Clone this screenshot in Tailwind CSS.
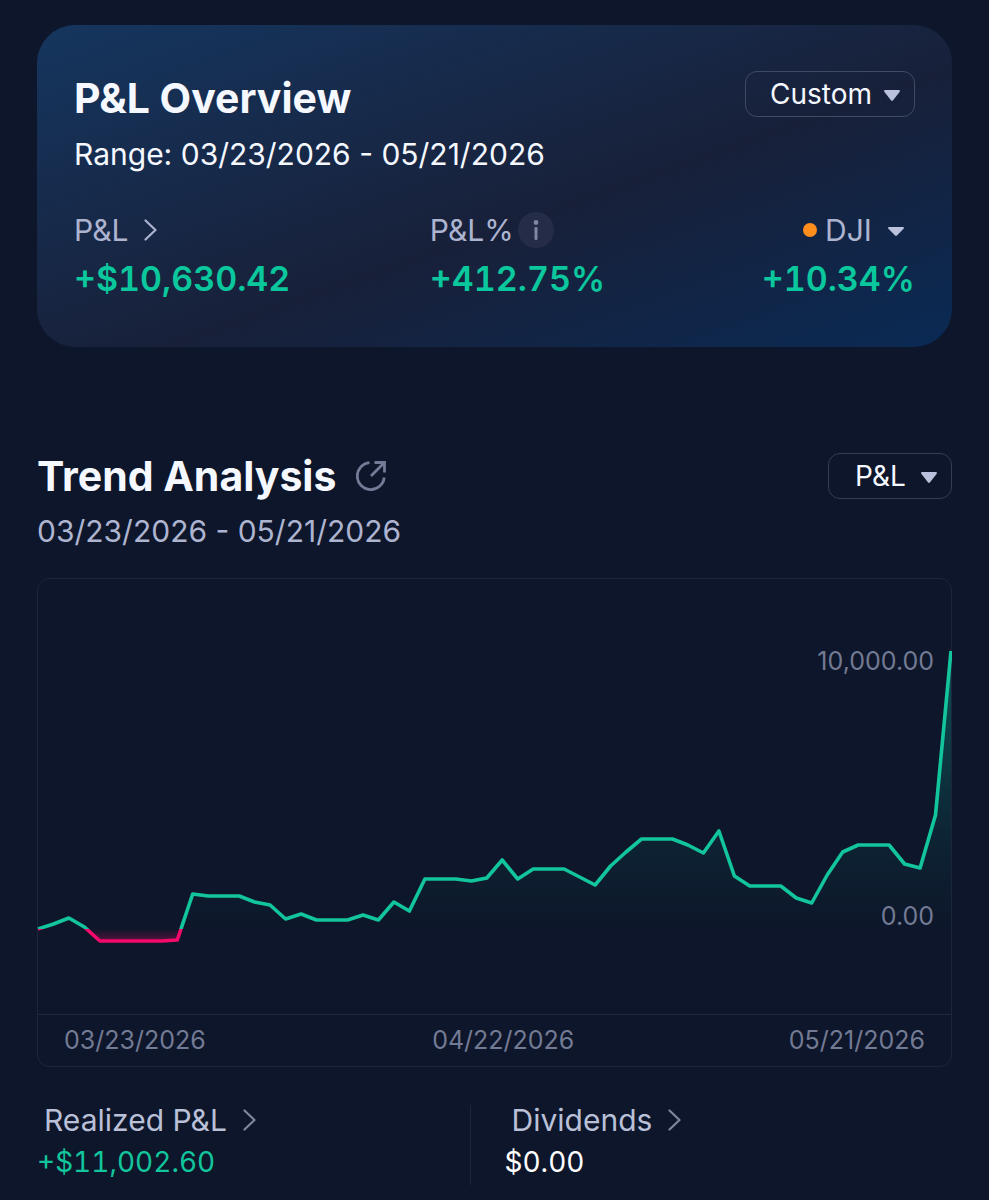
<!doctype html>
<html lang="en">
<head>
  <meta charset="UTF-8">
  <meta name="viewport" content="width=device-width, initial-scale=1.0">
  <title>P&amp;L Overview</title>
  <script src="https://cdn.jsdelivr.net/npm/@tailwindcss/browser@4"></script>
</head>
<body class="min-h-screen bg-[#0d162a] px-[37px] pt-[25px] font-[Inter,sans-serif] text-[#f5f8ff]">

  <!-- Overview card -->
  <section class="rounded-[38px] bg-[linear-gradient(to_bottom_right,#15365f_0%,#182039_57%,#0a2a54_100%)] px-[37px] pt-[46px] pb-[38px]">
    <div class="flex items-start justify-between">
      <div>
        <h1 class="text-[41px] leading-[54px] font-bold">P&amp;L Overview</h1>
        <p class="mt-2 text-[30px] leading-[42px]">Range: 03/23/2026 - 05/21/2026</p>
      </div>
      <div class="relative">
        <select aria-label="Date range" class="block h-[46px] w-[170px] appearance-none rounded-xl border border-[#404a63] bg-transparent pl-6 text-[28px] leading-10 outline-none">
          <option>Custom</option>
        </select>
        <svg class="pointer-events-none absolute top-[19px] right-[15px] h-3 w-4" viewBox="0 0 16 12" fill="#b9c1dc"><path d="M1.2 0h13.6c1 0 1.5 1 .9 1.8L8.9 10.5c-.5.6-1.3.6-1.8 0L.3 1.8C-.3 1 .2 0 1.2 0z"/></svg>
      </div>
    </div>

    <div class="mt-9 grid grid-cols-[11fr_15fr]">
      <div>
        <a href="#" class="flex items-center gap-4 text-[30px] leading-[38px] text-[#adb4d0]">
          P&amp;L
          <svg class="h-[22px] w-[13px]" viewBox="0 0 13 22" fill="none" stroke="currentColor" stroke-width="2.2" stroke-linecap="round" stroke-linejoin="round"><path d="M1.5 1.5 11.5 11l-10 9.5"/></svg>
        </a>
        <p class="text-[34px] leading-[60px] font-semibold tabular-nums text-[#0bc79d]">+$10,630.42</p>
      </div>
      <div class="flex justify-between">
        <div>
          <div class="flex items-center gap-1 text-[30px] leading-[38px] text-[#adb4d0]">
            P&amp;L%
            <button aria-label="About P&amp;L%" class="-my-px flex size-9 items-center justify-center rounded-full bg-[#252c47]">
              <svg class="h-5 w-1.5" viewBox="0 0 6 20" fill="#7e86a0"><circle cx="3" cy="2.5" r="2.4"/><rect x="1.5" y="7" width="3" height="13" rx="1"/></svg>
            </button>
          </div>
          <p class="text-[34px] leading-[60px] font-semibold tabular-nums text-[#0bc79d]">+412.75%</p>
        </div>
        <div>
          <div class="relative flex items-center justify-end gap-2 pr-[11px] text-[30px] leading-[38px] text-[#adb4d0]">
            <span class="size-3.5 rounded-full bg-[#ff8e1c]"></span>
            <select aria-label="Benchmark" class="h-[38px] appearance-none bg-transparent pr-8 outline-none">
              <option>DJI</option>
            </select>
            <svg class="pointer-events-none absolute top-4 right-[11px] h-2.5 w-4" viewBox="0 0 16 10" fill="#b9c1dc"><path d="M1.2 0h13.6c1 0 1.5 1 .8 1.7L8.9 8.6c-.5.6-1.3.6-1.8 0L.4 1.7C-.3 1 .2 0 1.2 0z"/></svg>
          </div>
          <p class="text-[34px] leading-[60px] font-semibold tabular-nums text-[#0bc79d]">+10.34%</p>
        </div>
      </div>
    </div>
  </section>

  <!-- Trend analysis -->
  <section class="mt-[102px]">
    <div class="flex items-center justify-between">
      <div class="flex items-center gap-5">
        <h2 class="text-[41px] leading-[54px] font-bold">Trend Analysis</h2>
        <a href="#" aria-label="Open trend analysis">
          <svg class="size-[30px]" viewBox="0 0 30 30" fill="none" stroke="#737b97" stroke-width="2.8"><path d="M13.5 1.6A13.5 13.5 0 1 0 28.2 16.5"/><path d="M15 15 28.2 1.8M18.5 1.5h10v10"/></svg>
        </a>
      </div>
      <div class="relative">
        <select aria-label="Chart metric" class="block h-[46px] w-[124px] appearance-none rounded-xl border border-[#343d55] bg-transparent pl-[26px] text-[28px] leading-10 outline-none">
          <option>P&amp;L</option>
        </select>
        <svg class="pointer-events-none absolute top-[19px] right-[15px] h-3 w-4" viewBox="0 0 16 12" fill="#b9c1dc"><path d="M1.2 0h13.6c1 0 1.5 1 .9 1.8L8.9 10.5c-.5.6-1.3.6-1.8 0L.3 1.8C-.3 1 .2 0 1.2 0z"/></svg>
      </div>
    </div>
    <p class="mt-[7px] text-[30px] leading-[42px] text-[#adb4d0]">03/23/2026 - 05/21/2026</p>

    <div class="mt-[26px] rounded-xl border border-[#1c253b]">
      <svg id="chart" class="block h-auto w-full overflow-visible" viewBox="0 0 913 435" fill="none" role="img" aria-label="P&amp;L trend">
        <defs>
          <linearGradient id="gain" gradientUnits="userSpaceOnUse" x1="0" y1="72" x2="0" y2="350">
            <stop offset="0" stop-color="#0bc7a5" stop-opacity=".34"/>
            <stop offset=".5" stop-color="#0bc7a5" stop-opacity=".14"/>
            <stop offset=".7" stop-color="#0bc7a5" stop-opacity=".07"/>
            <stop offset="1" stop-color="#0bc7a5" stop-opacity="0"/>
          </linearGradient>
          <linearGradient id="loss" gradientUnits="userSpaceOnUse" x1="0" y1="350" x2="0" y2="363">
            <stop offset="0" stop-color="#f5096b" stop-opacity="0"/>
            <stop offset="1" stop-color="#f5096b" stop-opacity=".35"/>
          </linearGradient>
          <clipPath id="above"><rect x="-1" y="0" width="915" height="350"/></clipPath>
          <clipPath id="below"><rect x="-1" y="350" width="915" height="85"/></clipPath>
        </defs>
        <path class="area" fill="url(#gain)" clip-path="url(#above)"/>
        <path class="area" fill="url(#loss)" clip-path="url(#below)"/>
        <path class="line" stroke="#12c59c" stroke-width="3.6" stroke-linejoin="round" clip-path="url(#above)"/>
        <path class="line" stroke="#f5096b" stroke-width="3.6" stroke-linejoin="round" clip-path="url(#below)"/>
        <g class="text-[25px]" fill="#737a93" text-anchor="end">
          <text x="896" y="91">10,000.00</text>
          <text x="896" y="346">0.00</text>
        </g>
      </svg>
      <div class="flex justify-between border-t border-[#1f2840] px-[26px] text-[25px] leading-[51px] text-[#737a93]">
        <span>03/23/2026</span>
        <span class="pl-3">04/22/2026</span>
        <span>05/21/2026</span>
      </div>
    </div>
  </section>

  <!-- Totals -->
  <section class="mt-8 flex text-[30px] leading-[42px]">
    <div class="w-[calc(50%-25px)] pb-0.5">
      <a href="#" class="flex items-center gap-4 pl-[7px] text-[#b9c0d8]">
        Realized P&amp;L
        <svg class="h-[22px] w-[13px]" viewBox="0 0 13 22" fill="none" stroke="#7e86a0" stroke-width="2.2" stroke-linecap="round" stroke-linejoin="round"><path d="M1.5 1.5 11.5 11l-10 9.5"/></svg>
      </a>
      <p class="text-[28px] tabular-nums text-[#12c59c]">+$11,002.60</p>
    </div>
    <div class="mt-1.5 w-px bg-[#1c253b]"></div>
    <div class="pl-[34px]">
      <a href="#" class="flex items-center gap-4 pl-[7px] text-[#b9c0d8]">
        Dividends
        <svg class="h-[22px] w-[13px]" viewBox="0 0 13 22" fill="none" stroke="#7e86a0" stroke-width="2.2" stroke-linecap="round" stroke-linejoin="round"><path d="M1.5 1.5 11.5 11l-10 9.5"/></svg>
      </a>
      <p class="text-[28px] tabular-nums text-white">$0.00</p>
    </div>
  </section>

  <script>
    // one value per day, as the height on the chart; y = 350 is break-even
    const days = [
      350, 345, 339, 348, 362, 362, 362, 362, 362, 361,
      315, 317, 317, 317, 323, 326, 340, 335, 341, 341,
      341, 336, 341, 323, 332, 300, 300, 300, 302, 299,
      281, 300, 290, 290, 290, 298, 306, 287, 273, 260,
      260, 260, 266, 274, 252, 297, 307, 307, 307, 319,
      324, 296, 273, 266, 266, 266, 285, 289, 236, 72
    ];
    const step = 913 / (days.length - 1);
    const line = 'M' + days.map((y, i) => (i * step).toFixed(1) + ' ' + y).join('L');

    document.querySelectorAll('#chart .line').forEach(p => p.setAttribute('d', line));
    document.querySelectorAll('#chart .area').forEach(p => p.setAttribute('d', line + 'V350H0Z'));
  </script>
</body>
</html>
